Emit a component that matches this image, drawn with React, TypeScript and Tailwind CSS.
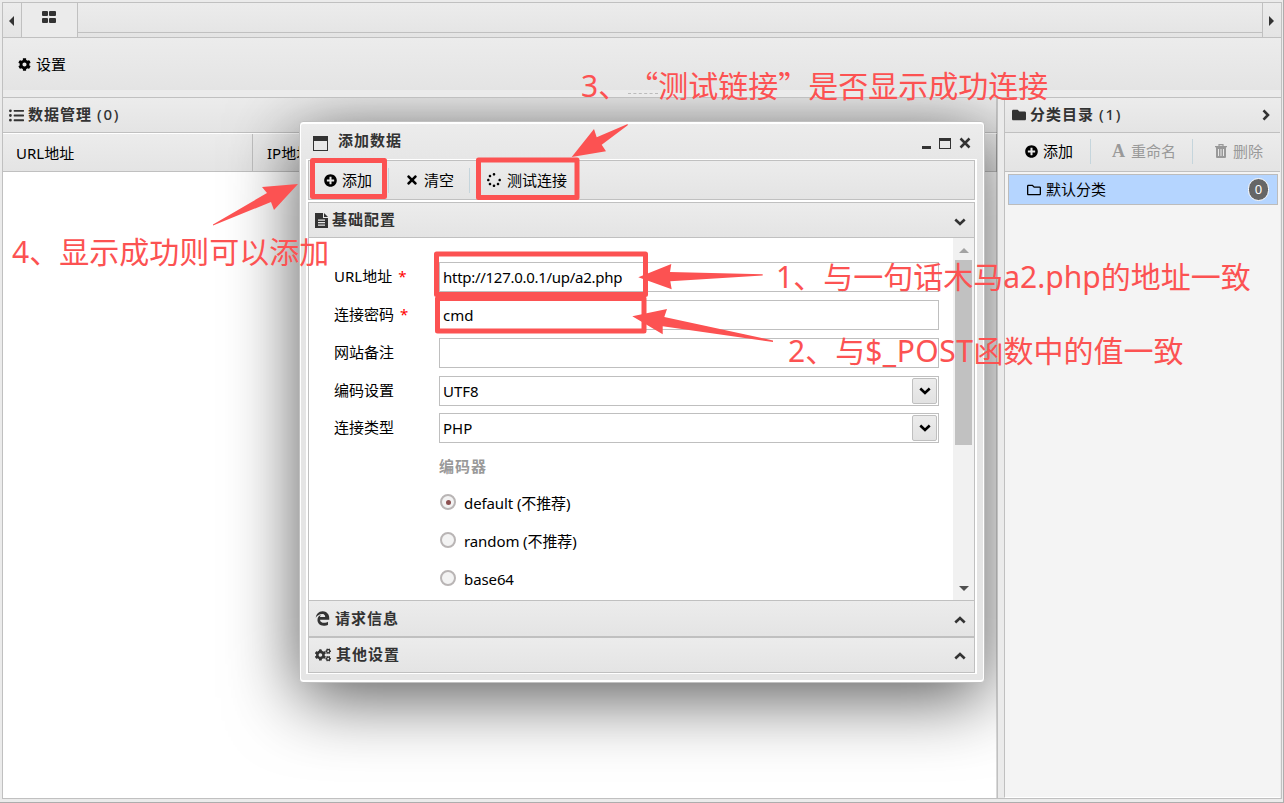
import type { ReactNode } from "react"
import {
  FaCog,
  FaCogs,
  FaEdgeLegacy,
  FaFolder,
  FaListUl,
  FaPlusCircle,
  FaRegFolder,
  FaSpinner,
  FaTimes,
} from "react-icons/fa"

const bar = "bg-gradient-to-b from-[#ececec] to-[#e4e4e4]"

function Chevron({ className }: { className?: string }) {
  return (
    <svg width="12" height="8" viewBox="0 0 12 8" className={className}>
      <path d="M1.3 1.5L6 6l4.700-4.500" fill="none" stroke="currentColor" strokeWidth="2.600" />
    </svg>
  )
}

function FileIcon() {
  return (
    <svg width="13" height="15" viewBox="0 0 13 15" fill="currentColor">
      <path fillRule="evenodd" d="M0 0h8v5h5v10H0zM3 6.500v1.200h7V6.500zM3 9v1.200h7V9zM3 11.500v1.200h7v-1.200z" />
      <path d="M9 0l4 4H9z" />
    </svg>
  )
}

function TrashIcon() {
  return (
    <svg width="12" height="14" viewBox="0 0 12 14">
      <path d="M4 2V.7h4V2" fill="none" stroke="currentColor" strokeWidth="1.200" />
      <path fill="currentColor" fillRule="evenodd" d="M0 2h12v1.300h-1V13q0 1-1 1H2q-1 0-1-1V3.300H0zM3 5v7h1V5zM5.500 5v7h1V5zM8 5v7h1V5z" />
    </svg>
  )
}

function Separator() {
  return <div className="h-[25px] w-px shrink-0 bg-[#c5d5dc]" />
}

function Row({ label, required, className, children }: { label: string; required?: boolean; className?: string; children?: ReactNode }) {
  return (
    <div className={`flex h-[30px] ${className ?? "mb-2"}`}>
      <div className="w-[105px] leading-[29px] whitespace-nowrap">
        {label}
        {required && <span className="ml-1.5 text-[#ff0000]">*</span>}
      </div>
      <div className="flex w-[500px] items-center justify-between border border-[#bfbfbf] bg-white pr-px pl-[3px]">{children}</div>
    </div>
  )
}

function SelectButton() {
  return (
    <span className="flex h-[26px] w-[25px] items-center justify-center rounded-[2px] border border-[#bfbfbf] bg-gradient-to-b from-[#ececec] to-[#e2e2e2]">
      <Chevron />
    </span>
  )
}

const encoders = [
  { name: "default (不推荐)", checked: true },
  { name: "random (不推荐)", checked: false },
  { name: "base64", checked: false },
]

function AddWindow() {
  return (
    <div className="absolute top-[23px] left-[296px] h-[562px] w-[686px] rounded-[4px] border border-[#c0c0c0] bg-white px-px py-[2px] shadow-[0_15px_70px_rgba(0,0,0,0.65)]">
      <div className="flex h-full flex-col rounded-[2px] bg-[#e5e5e5] bg-gradient-to-b from-[#ececec] from-0% to-[#e5e5e5] to-[8%] pr-[6px] pb-[6px] pl-[5px]">
        <div className="flex h-[35px] shrink-0 items-center text-[#333]">
          <div className="mt-[3px] ml-[7px] h-[15px] w-[15px] border border-t-[5px] border-[#333]" />
          <span className="mb-[3px] ml-[10px] font-bold tracking-[1px]">添加数据</span>
          <div className="mt-[3px] mr-[6px] ml-auto flex items-center gap-[8px]">
            <span className="mt-2 h-[3px] w-[9px] bg-[#333]" />
            <span className="h-[11px] w-[12px] border border-t-[3px] border-[#333]" />
            <svg width="12" height="12" viewBox="0 0 12 12">
              <path d="M1.500 1.500l9 9M10.500 1.500l-9 9" stroke="#333" strokeWidth="2.500" />
            </svg>
          </div>
        </div>
        <div className="flex grow flex-col border-x-2 border-y border-white bg-white">
          <div className={`flex h-[40px] shrink-0 items-center border border-[#c0c0c0] ${bar}`}>
            <div className="flex w-[79px] items-center gap-[5px] pl-[15px]">
              <FaPlusCircle size={13} />添加
            </div>
            <Separator />
            <div className="flex w-[80px] items-center gap-[5px] pl-[16px]">
              <FaTimes size={14} />清空
            </div>
            <Separator />
            <div className="flex items-center gap-[6px] pl-[17px]">
              <FaSpinner size={14} />测试连接
            </div>
          </div>
          <div className={`mt-[2px] flex h-[36px] shrink-0 items-center border border-[#c0c0c0] pl-[6px] font-bold text-[#333] ${bar}`}>
            <FileIcon />
            <span className="mb-[2px] ml-[4px] tracking-[1px]">基础配置</span>
            <Chevron className="mt-[3px] mr-[8px] ml-auto" />
          </div>
          <div className="flex h-[362px] shrink-0 justify-between border-x border-[#c0c0c0]">
            <div className="pt-[24px] pl-[25px]">
              <Row label="URL地址" required>
                <span className="tracking-[-0.280px]">http://127.0.0.1/up/a2.php</span>
              </Row>
              <Row label="连接密码" required>
                cmd
              </Row>
              <Row label="网站备注" />
              <Row label="编码设置" className="mb-[7px]">
                UTF8
                <SelectButton />
              </Row>
              <Row label="连接类型">
                PHP
                <SelectButton />
              </Row>
              <div className="pl-[105px]">
                <div className="h-[33px] leading-[31px] font-bold tracking-[1px] text-[#999]">编码器</div>
                {encoders.map((e) => (
                  <div key={e.name} className="flex h-[38px] items-center">
                    <span className="mb-[2px] ml-px flex h-4 w-4 items-center justify-center rounded-full border-2 border-[#b9b5b5] bg-[#f3f3f3]">
                      {e.checked && <span className="h-[5px] w-[5px] rounded-full bg-[#8c5050]" />}
                    </span>
                    <span className="ml-2 tracking-[-0.100px]">{e.name}</span>
                  </div>
                ))}
              </div>
            </div>
            <div className="flex w-[21px] flex-col items-center bg-[#f1f1f1]">
              <div className="mt-[10px] border-x-[5px] border-b-[5px] border-x-transparent border-b-[#a3a3a3]" />
              <div className="mt-[7px] h-[185px] w-[17px] bg-[#c1c1c1]" />
              <div className="mt-auto mb-[9px] border-x-[5px] border-t-[5px] border-x-transparent border-t-[#505050]" />
            </div>
          </div>
          <div className={`flex h-[37px] shrink-0 items-center border border-[#c0c0c0] pl-[6px] font-bold text-[#333] ${bar}`}>
            <FaEdgeLegacy size={15} />
            <span className="mb-[2px] ml-[5px] tracking-[1px]">请求信息</span>
            <Chevron className="mt-[2px] mr-[8px] ml-auto rotate-180" />
          </div>
          <div className={`flex h-[36px] shrink-0 items-center border border-[#c0c0c0] pl-[6px] font-bold text-[#333] ${bar}`}>
            <FaCogs size={16} />
            <span className="mb-[2px] ml-[5px] tracking-[1px]">其他设置</span>
            <Chevron className="mt-[1px] mr-[8px] ml-auto rotate-180" />
          </div>
        </div>
      </div>
    </div>
  )
}

// Red boxes, arrows and notes lying over the page
function Notes() {
  return (
    <div className="absolute inset-0 text-[30px] leading-[40px] whitespace-nowrap text-[#fc5252]">
      <svg width="1284" height="803" className="absolute inset-0" fill="#fc5252">
        <g fill="none" stroke="#fc5252" strokeWidth="5" strokeLinejoin="round">
          <rect x="312.500" y="160.500" width="72" height="36" />
          <rect x="478.500" y="160" width="98.500" height="37.500" />
          <rect x="436.500" y="254" width="209" height="40.500" />
          <rect x="437.500" y="298.500" width="206.500" height="32.500" />
        </g>
        <path d="M298 184L262 187l5 6-54 31.500v1L271 202l3 8z" />
        <path d="M571.700 157L594 129l2.700 8.300 31-13.300v1.200L601.700 144.700l4.300 6.600z" />
        <path d="M638.300 277.300L671.300 264l-1.300 8 92.700 2.300v1.200L670.300 281.300l1.400 8z" />
        <path d="M632.300 316.300L667 309l-2.700 8L773 340.500v1.500L662.700 326.300v8z" />
      </svg>
      <div className="absolute top-[93px] left-[628px] w-[30px] border-t border-dashed border-[#bbb]" />
      <div className="absolute top-[64px] left-[581px] [text-spacing-trim:space-all]">
        3、<span className="font-['Noto_Sans_CJK_SC',sans-serif]">“测试链接”</span>是否显示成功连接
      </div>
      <div className="absolute top-[257px] left-[776px]">1、与一句话木马a2.php的地址一致</div>
      <div className="absolute top-[331px] left-[788px]">
        2、与<span className="tracking-[0.500px]">$_POST</span>函数中的值一致
      </div>
      <div className="absolute top-[232px] left-[12px]">4、显示成功则可以添加</div>
    </div>
  )
}

function App() {
  return (
    <main className="relative h-[803px] w-[1284px] overflow-hidden border-r border-b border-[#adadad] bg-[#ebebeb] pt-[2px] pl-[2px] font-['Noto_Sans','Noto_Sans_CJK_SC',sans-serif] text-[15px] leading-[20px] text-black">
      <div className="flex h-[797px] w-[1280px] flex-col border border-[#c0c0c0]">
        <div className={`flex h-[35px] shrink-0 border-b border-[#c0c0c0] ${bar}`}>
          <div className="flex w-[19px] items-center border-r border-[#c0c0c0] pt-[2px] pl-[6px]">
            <div className="border-y-[5px] border-r-[5px] border-y-transparent border-r-[#333]" />
          </div>
          <div className="flex w-[56px] justify-center border-r border-[#c0c0c0] bg-[#ebebeb] pt-[8px] pr-[2px]">
            <div className="grid h-3 w-[14px] grid-cols-2 gap-x-px gap-y-[2px]">
              <span className="rounded-[1px] bg-[#333]" />
              <span className="rounded-[1px] bg-[#333]" />
              <span className="rounded-[1px] bg-[#333]" />
              <span className="rounded-[1px] bg-[#333]" />
            </div>
          </div>
          <div className="h-[30px] grow border-b border-[#c0c0c0]" />
          <div className="flex w-[19px] items-center border-l border-[#c0c0c0] pt-[2px] pl-[6px]">
            <div className="border-y-[5px] border-l-[5px] border-y-transparent border-l-[#333]" />
          </div>
        </div>

        <div className={`flex h-[52px] shrink-0 items-center gap-[5px] pl-[15px] ${bar}`}>
          <FaCog size={13} />设置
        </div>
        <div className="h-[8px] shrink-0 border-b border-[#c0c0c0]" />

        <div className="flex grow">
          <section className="relative w-[995px] overflow-hidden border-r border-[#c0c0c0] bg-white">
            <div className={`flex h-[35px] items-center border-b border-[#c0c0c0] pl-[6px] font-bold text-[#333] ${bar}`}>
              <FaListUl size={15} />
              <span className="mb-[2px] ml-[4px] tracking-[1px]">
                数据管理 <span className="font-medium tracking-[1.800px]">(0)</span>
              </span>
            </div>
            <div className="mt-px flex h-[38px] border-b border-[#c0c0c0]">
              <div className={`w-[250px] border-r border-[#c0c0c0] pt-[9px] pl-[13px] ${bar}`}>URL地址</div>
              <div className={`grow border-r border-[#c0c0c0] pt-[9px] pl-[14px] ${bar}`}>IP地址</div>
            </div>
            <AddWindow />
            <div className="absolute inset-y-0 right-0 w-px bg-black/15" />
          </section>

          <div className="w-[6px]" />

          <aside className="mr-px flex grow flex-col border-b border-l border-b-white border-l-[#c0c0c0] bg-[#f4f4f4]">
            <div className={`flex h-[35px] shrink-0 items-center border-b border-[#c0c0c0] pl-[7px] font-bold text-[#333] ${bar}`}>
              <FaFolder size={14} />
              <span className="mb-[2px] ml-[4px] tracking-[1px]">
                分类目录 <span className="font-medium tracking-[1.800px]">(1)</span>
              </span>
              <Chevron className="mr-[8px] ml-auto -rotate-90" />
            </div>
            <div className={`flex h-[39px] shrink-0 items-center border-b border-[#c0c0c0] pb-[2px] ${bar}`}>
              <div className="flex w-[85px] items-center gap-[5px] pl-[20px]">
                <FaPlusCircle size={13} />添加
              </div>
              <Separator />
              <div className="flex w-[101px] items-center gap-[6px] pl-[21px] text-[#999]">
                <span className="w-[13px] font-['Liberation_Serif',serif] text-[18px] font-bold">A</span>重命名
              </div>
              <Separator />
              <div className="flex items-center gap-[6px] pl-[22px] text-[#999]">
                <TrashIcon />删除
              </div>
            </div>
            <div className="mt-[2px] mr-[2px] ml-[3px] flex h-[31px] items-center border border-[#bcbcbc] bg-[#b5d5ff] pr-[8px] pl-[18px]">
              <FaRegFolder size={14} />
              <span className="mb-[2px] ml-[5px]">默认分类</span>
              <span className="ml-auto flex h-[23px] w-[21px] items-center justify-center rounded-full border border-white bg-[#666] pb-px text-[13px] text-white">0</span>
            </div>
          </aside>
        </div>
      </div>
      <Notes />
    </main>
  )
}

export default App
